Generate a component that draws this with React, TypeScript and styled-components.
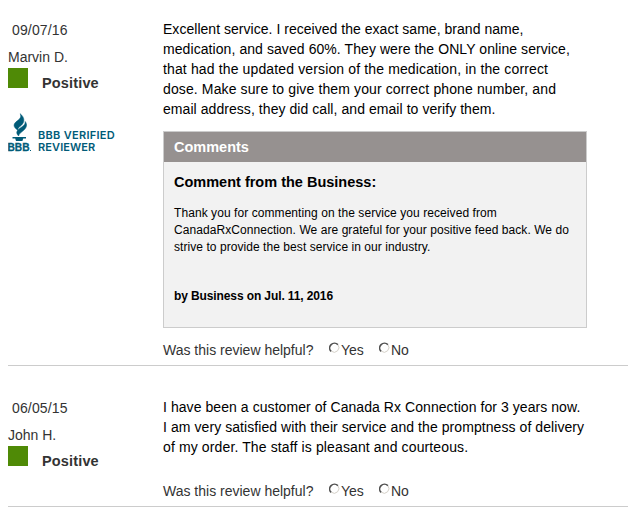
import React from "react";
import styled, { createGlobalStyle } from "styled-components";

const Global = createGlobalStyle`
  body { margin: 0; background: #fff; }
  * { box-sizing: border-box; }
  p, h3 { margin: 0; }
`;

const Page = styled.main`
  width: 636px;
  height: 510px;
  overflow: hidden;
  padding: 0 8px;
  font: 14px/20px "Liberation Sans", Arial, sans-serif;
  color: #333;
`;

const Review = styled.article<{ $top: number }>`
  display: grid;
  grid-template-columns: 155px 424px;
  padding-top: ${(p) => p.$top}px;
  border-bottom: 1px solid #ccc;
`;

const Side = styled.aside`
  display: flex;
  flex-direction: column;
`;

const DateText = styled.time`
  margin: 1px 0 0 4px;
  letter-spacing: 0.15px;
`;

const Name = styled.div`
  margin-top: 7px;
`;

const Rating = styled.div`
  display: flex;
  gap: 14px;
  height: 25px;
  margin-top: 1px;
`;

const Swatch = styled.i`
  width: 20px;
  height: 20px;
  background: #4f8a06;
`;

const RatingLabel = styled.strong`
  font-size: 14.5px;
  letter-spacing: 0.15px;
  padding-top: 5px;
`;

const Verified = styled.div`
  display: flex;
  align-items: flex-start;
  margin-top: 19px;
  color: #015b78;
`;

const VerifiedText = styled.div`
  margin: 17px 0 0 6px;
  font: 600 11px/12px Inter, "Liberation Sans", sans-serif;
`;

const Line = styled.span<{ $s?: number }>`
  display: block;
  white-space: nowrap;
  letter-spacing: ${(p) => p.$s ?? 0}px;
`;

const Body = styled.p`
  color: #000;
`;

const Comments = styled.section`
  height: 197px;
  margin-top: 12px;
  border: 1px solid #ccc;
  background: #f2f2f2;
  color: #000;
`;

const CommentsBar = styled.h3`
  height: 30px;
  padding-left: 10px;
  background: #969190;
  color: #fff;
  font-size: 14.5px;
  line-height: 30px;
`;

const CommentBody = styled.div`
  padding: 10px 10px 0;
  font-size: 12px;
  line-height: 17px;
`;

const CommentTitle = styled.h3`
  font-size: 14.5px;
  line-height: 20px;
  margin-bottom: 13px;
`;

const Byline = styled.strong`
  display: block;
  margin-top: 32px;
  letter-spacing: -0.11px;
`;

const Helpful = styled.div<{ $top: number }>`
  display: flex;
  height: 20px;
  margin: ${(p) => p.$top}px 0 5px;
  white-space: nowrap;
`;

const Question = styled.span`
  width: 166px;
`;

const Option = styled.label`
  display: flex;
  width: 50px;
`;

const Dial = styled.svg`
  width: 12px;
  height: 12px;
  margin-top: 2px;
  flex: none;
`;

function Radio({ label }: { label: string }) {
  return (
    <Option>
      <Dial viewBox="0 0 12 12" fill="none">
        <path d="M2.300 9.200A4.700 4.700 0 0 0 8.900 2.600" stroke="#d4d0c8" />
        <path d="M2.100 9.400A4.700 4.700 0 0 1 8.900 2.600" stroke="#505050" strokeWidth="1.600" />
      </Dial>
      {label}
    </Option>
  );
}

function HelpfulRow({ top }: { top: number }) {
  return (
    <Helpful $top={top}>
      <Question>Was this review helpful?</Question>
      <Radio label="Yes" />
      <Radio label="No" />
    </Helpful>
  );
}

function Reviewer({ date, name, children }: { date: string; name: string; children?: React.ReactNode }) {
  return (
    <Side>
      <DateText>{date}</DateText>
      <Name>{name}</Name>
      <Rating>
        <Swatch />
        <RatingLabel>Positive</RatingLabel>
      </Rating>
      {children}
    </Side>
  );
}

function Torch() {
  return (
    <svg width="24" height="40" viewBox="0 0 24 40" fill="currentColor">
      <g stroke="currentColor" strokeWidth="0.500" strokeLinejoin="round">
        <path d="M12.200 1.700C13.400 5 12.400 6.300 9.600 8.600C4.900 12 4.800 14.700 9.900 18.400C9.500 16.400 10.800 15.300 13.200 13.400C17 10 16.800 5.500 12.200 1.700Z" />
        <path d="M17.200 9.500C17.400 12 16.300 13 13.700 15C8.700 18.400 7.200 20.500 10.600 24C10.900 22 12.300 21.100 14.500 19.300C18.900 15.900 19.600 12.700 17.200 9.500Z" />
      </g>
      <path d="M4.500 25H18V26.500H15.200L14.400 29H8L7.200 26.500H4.500Z" />
      <text x="-0.5" y="39" fontFamily="Liberation Sans, sans-serif" fontWeight="700" fontSize="10.500" stroke="currentColor" strokeWidth="0.300" textLength="22" lengthAdjust="spacingAndGlyphs">BBB</text>
      <rect x="22" y="38" width="1" height="1" />
    </svg>
  );
}

export default function App() {
  return (
    <>
      <Global />
      <Page>
        <Review $top={19}>
          <Reviewer date="09/07/16" name="Marvin D.">
            <Verified>
              <Torch />
              <VerifiedText>
                <Line $s={0.29}>BBB VERIFIED</Line>
                <Line $s={0.1}>REVIEWER</Line>
              </VerifiedText>
            </Verified>
          </Reviewer>
          <div>
            <Body>
              <Line $s={0.03}>Excellent service. I received the exact same, brand name,</Line>
              <Line $s={0.075}>medication, and saved 60%. They were the ONLY online service,</Line>
              <Line $s={0.135}>that had the updated version of the medication, in the correct</Line>
              <Line $s={0.12}>dose. Make sure to give them your correct phone number, and</Line>
              <Line $s={0.06}>email address, they did call, and email to verify them.</Line>
            </Body>
            <Comments>
              <CommentsBar>Comments</CommentsBar>
              <CommentBody>
                <CommentTitle>Comment from the Business:</CommentTitle>
                <Line $s={0.07}>Thank you for commenting on the service you received from</Line>
                <Line $s={0.065}>CanadaRxConnection. We are grateful for your positive feed back. We do</Line>
                <Line $s={0.06}>strive to provide the best service in our industry.</Line>
                <Byline>by Business on Jul. 11, 2016</Byline>
              </CommentBody>
            </Comments>
            <HelpfulRow top={12} />
          </div>
        </Review>
        <Review $top={31}>
          <Reviewer date="06/05/15" name="John H." />
          <div>
            <Body>
              <Line $s={0.065}>I have been a customer of Canada Rx Connection for 3 years now.</Line>
              <Line $s={0.07}>I am very satisfied with their service and the promptness of delivery</Line>
              <Line $s={0.125}>of my order. The staff is pleasant and courteous.</Line>
            </Body>
            <HelpfulRow top={24} />
          </div>
        </Review>
      </Page>
    </>
  );
}
